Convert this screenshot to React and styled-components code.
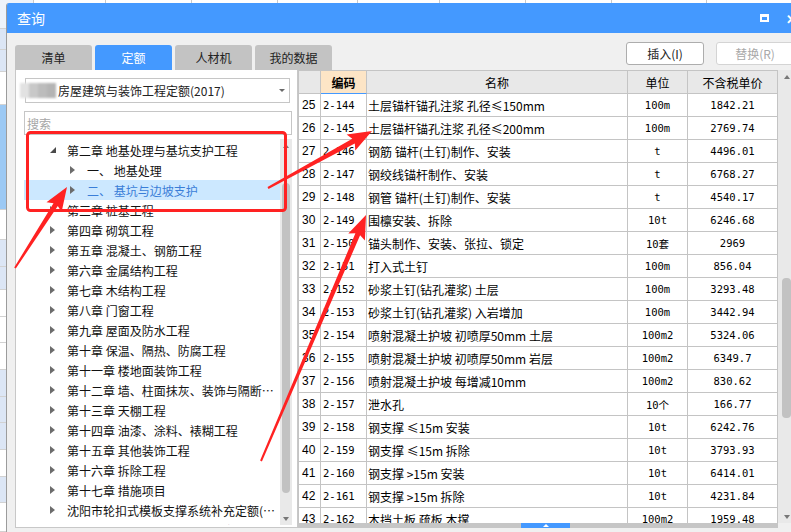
import React from 'react'
import styled, { createGlobalStyle } from 'styled-components'

const GlobalStyle = createGlobalStyle`
  html, body {
    margin: 0;
    padding: 0;
  }
  body {
    width: 791px;
    height: 532px;
    overflow: hidden;
    background: #fff;
    font-family: "Noto Sans CJK SC", "Noto Sans", sans-serif;
    color: #111;
  }
`

const sheetCols = [34, 72, 86, 86, 80, 82, 86, 86, 95, 90]
const sheetRows = [
  { h: 29, bg: '#eef3fa' }, { h: 21, bg: '#dce6f5' }, { h: 22, bg: '#dce6f5' },
  { h: 33, bg: '#fff' }, { h: 105, bg: '#9cc9f4' }, { h: 30, bg: '#fff' },
  { h: 27, bg: '#dce6f5' }, { h: 23, bg: '#dce6f5' }, { h: 27, bg: '#fff' },
  { h: 26, bg: '#fff' }, { h: 27, bg: '#fff' }, { h: 27, bg: '#dce6f5' },
  { h: 26, bg: '#dce6f5' }, { h: 27, bg: '#dce6f5' }, { h: 27, bg: '#fff' },
  { h: 26, bg: '#dce6f5' }, { h: 29, bg: '#fff' },
]

const tree = [
  { level: 0, label: '第二章 地基处理与基坑支护工程', open: true },
  { level: 1, label: '一、 地基处理' },
  { level: 1, label: '二、 基坑与边坡支护', selected: true },
  { level: 0, label: '第三章 桩基工程' },
  { level: 0, label: '第四章 砌筑工程' },
  { level: 0, label: '第五章 混凝土、钢筋工程' },
  { level: 0, label: '第六章 金属结构工程' },
  { level: 0, label: '第七章 木结构工程' },
  { level: 0, label: '第八章 门窗工程' },
  { level: 0, label: '第九章 屋面及防水工程' },
  { level: 0, label: '第十章 保温、隔热、防腐工程' },
  { level: 0, label: '第十一章 楼地面装饰工程' },
  { level: 0, label: '第十二章 墙、柱面抹灰、装饰与隔断、幕墙工程' },
  { level: 0, label: '第十三章 天棚工程' },
  { level: 0, label: '第十四章 油漆、涂料、裱糊工程' },
  { level: 0, label: '第十五章 其他装饰工程' },
  { level: 0, label: '第十六章 拆除工程' },
  { level: 0, label: '第十七章 措施项目' },
  { level: 0, label: '沈阳市轮扣式模板支撑系统补充定额(2019)' },
  { level: 0, label: '沈阳市轮扣式钢管脚手架补充定额(2019)' },
]

const rows = [
  ['25', '2-144', '土层锚杆锚孔注浆 孔径≤150mm', '100m', '1842.21'],
  ['26', '2-145', '土层锚杆锚孔注浆 孔径≤200mm', '100m', '2769.74'],
  ['27', '2-146', '钢筋 锚杆(土钉)制作、安装', 't', '4496.01'],
  ['28', '2-147', '钢绞线锚杆制作、安装', 't', '6768.27'],
  ['29', '2-148', '钢管 锚杆(土钉)制作、安装', 't', '4540.17'],
  ['30', '2-149', '围檩安装、拆除', '10t', '6246.68'],
  ['31', '2-150', '锚头制作、安装、张拉、锁定', '10套', '2969'],
  ['32', '2-151', '打入式土钉', '100m', '856.04'],
  ['33', '2-152', '砂浆土钉(钻孔灌浆) 土层', '100m', '3293.48'],
  ['34', '2-153', '砂浆土钉(钻孔灌浆) 入岩增加', '100m', '3442.94'],
  ['35', '2-154', '喷射混凝土护坡 初喷厚50mm 土层', '100m2', '5324.06'],
  ['36', '2-155', '喷射混凝土护坡 初喷厚50mm 岩层', '100m2', '6349.7'],
  ['37', '2-156', '喷射混凝土护坡 每增减10mm', '100m2', '830.62'],
  ['38', '2-157', '泄水孔', '10个', '166.77'],
  ['39', '2-158', '钢支撑 ≤15m 安装', '10t', '6242.76'],
  ['40', '2-159', '钢支撑 ≤15m 拆除', '10t', '3793.93'],
  ['41', '2-160', '钢支撑 >15m 安装', '10t', '6414.01'],
  ['42', '2-161', '钢支撑 >15m 拆除', '10t', '4231.84'],
  ['43', '2-162', '木挡土板 疏板 木撑', '100m2', '1959.48'],
]

// tapered red arrow used by the annotations
const arrowPoints = (x1, y1, x2, y2) => {
  const dx = x2 - x1
  const dy = y2 - y1
  const len = Math.hypot(dx, dy)
  const ux = dx / len
  const uy = dy / len
  const px = -uy
  const py = ux
  const head = 21
  const hw = 9
  const bx = x2 - ux * head
  const by = y2 - uy * head
  const pts = [
    [x1 + px * 1, y1 + py * 1],
    [bx + px * 2.6, by + py * 2.6],
    [bx - ux * 3 + px * hw, by - uy * 3 + py * hw],
    [x2, y2],
    [bx - ux * 3 - px * hw, by - uy * 3 - py * hw],
    [bx - px * 2.6, by - py * 2.6],
    [x1 - px * 1, y1 - py * 1],
  ]
  return pts.map((p) => p.map((v) => v.toFixed(1)).join(',')).join(' ')
}

const App = () => {
  return (
    <Desktop>
      <GlobalStyle />
      <Sheet>
        {sheetRows.map((r, i) => (
          <SheetRow key={i} $h={r.h}>
            {sheetCols.map((w, j) => (
              <SheetCell key={j} $w={w} $bg={j === 0 ? r.bg : '#fff'} />
            ))}
          </SheetRow>
        ))}
      </Sheet>

      <Window>
        <TitleBar>
          <span>查询</span>
          <TitleActions>
            <MaxIcon />
            <CloseGlyph>✕</CloseGlyph>
          </TitleActions>
        </TitleBar>

        <Body>
          <LeftPane>
            <Tabs>
              <Tab>清单</Tab>
              <Tab $active>定额</Tab>
              <Tab>人材机</Tab>
              <Tab>我的数据</Tab>
            </Tabs>
            <Panel>
              <Dropdown>
                <Mosaic>
                  <span /><span /><span /><span />
                </Mosaic>
                <DropText>房屋建筑与装饰工程定额(2017)</DropText>
                <Caret />
              </Dropdown>
              <Search>搜索</Search>
              <Tree>
                <TreeList>
                  {tree.map((t, i) => (
                    <TreeRow key={i} $level={t.level} $selected={t.selected}>
                      <Toggle>{t.open ? <Expanded /> : <Collapsed />}</Toggle>
                      <TreeLabel>{t.label}</TreeLabel>
                    </TreeRow>
                  ))}
                </TreeList>
                <ScrollBar $w={12}>
                  <ArrowUp />
                  <Thumb $top={35} $h={310} $w={8} />
                  <Spacer />
                  <ArrowDown />
                </ScrollBar>
              </Tree>
            </Panel>
          </LeftPane>

          <RightPane>
            <Toolbar>
              <Button>插入(I)</Button>
              <Button disabled>替换(R)</Button>
            </Toolbar>
            <TableArea>
              <Grid>
                <Row>
                  <HeadCell />
                  <HeadCell $active>编码</HeadCell>
                  <HeadCell>名称</HeadCell>
                  <HeadCell>单位</HeadCell>
                  <HeadCell>不含税单价</HeadCell>
                </Row>
                {rows.map((r) => (
                  <Row key={r[0]}>
                    <NumCell>{r[0]}</NumCell>
                    <CodeCell>{r[1]}</CodeCell>
                    <NameCell>{r[2]}</NameCell>
                    <MonoCell>{r[3]}</MonoCell>
                    <MonoCell>{r[4]}</MonoCell>
                  </Row>
                ))}
              </Grid>
              <ScrollBar $w={17}>
                <ArrowUp />
                <Thumb $top={199} $h={140} $w={9} />
                <Spacer />
                <ArrowDown />
              </ScrollBar>
            </TableArea>
            <Splitter>
              <SplitBar>
                <SplitHandle />
              </SplitBar>
            </Splitter>
          </RightPane>
        </Body>
      </Window>

      <Marks viewBox='0 0 791 532'>
        <rect x='27.5' y='132.5' width='258' height='78' rx='3' fill='none' stroke='#ff2222' strokeWidth='3' />
        <polygon points={arrowPoints(15, 268, 67, 187)} fill='#ff2222' />
        <polygon points={arrowPoints(268, 188, 372, 131)} fill='#ff2222' />
        <polygon points={arrowPoints(261, 461, 366, 215)} fill='#ff2222' />
      </Marks>
    </Desktop>
  )
}

const Desktop = styled.div`
  position: relative;
  width: 791px;
  height: 532px;
  overflow: hidden;
  background: #fff;
`

const Sheet = styled.div`
  display: flex;
  flex-direction: column;
`

const SheetRow = styled.div`
  display: flex;
  height: ${(p) => p.$h}px;
  border-bottom: 1px solid #d2d2d2;
  box-sizing: border-box;
`

const SheetCell = styled.div`
  flex: none;
  width: ${(p) => p.$w}px;
  background: ${(p) => p.$bg};
  border-right: 1px solid #c9c9c9;
  box-sizing: border-box;
`

const Window = styled.div`
  position: absolute;
  left: 6px;
  top: 3px;
  width: 792px;
  height: 529px;
  display: flex;
  flex-direction: column;
  background: #f0f0f0;
  border-left: 1px solid #9c9c9c;
  border-top-left-radius: 3px;
  overflow: hidden;
  box-sizing: border-box;
`

const TitleBar = styled.div`
  flex: none;
  height: 30px;
  display: flex;
  align-items: center;
  justify-content: space-between;
  padding-left: 10px;
  background: #4499ff;
  color: #fff;
  font-size: 14px;
`

const TitleActions = styled.div`
  display: flex;
  align-items: center;
  gap: 17px;
  padding-right: 1px;
`

const MaxIcon = styled.div`
  width: 9px;
  height: 8px;
  border: 2px solid #fff;
  border-top-width: 3px;
  box-sizing: border-box;
`

const CloseGlyph = styled.div`
  font-size: 13px;
  font-weight: bold;
  line-height: 1;
`

const Body = styled.div`
  flex: 1;
  display: flex;
  padding: 9px 3px 4px 8px;
  min-height: 0;
`

const LeftPane = styled.div`
  flex: none;
  width: 283px;
  display: flex;
  flex-direction: column;
  padding-top: 3px;
`

const Tabs = styled.div`
  display: flex;
  gap: 3px;
  width: max-content;
`

const Tab = styled.div`
  flex: none;
  width: 77px;
  height: 25px;
  display: flex;
  align-items: center;
  justify-content: center;
  border-radius: 3px 3px 0 0;
  font-size: 12px;
  background: ${(p) => (p.$active ? '#4499ff' : '#c3c3c3')};
  color: ${(p) => (p.$active ? '#fff' : '#222')};
`

const Panel = styled.div`
  flex: 1;
  display: flex;
  flex-direction: column;
  min-height: 0;
  padding: 8px 5px 2px 8px;
  background: #fff;
  border: 1px solid #c8c8c8;
  border-top: none;
`

const Dropdown = styled.div`
  flex: none;
  width: 265px;
  height: 25px;
  margin-left: 1px;
  display: flex;
  align-items: center;
  padding-right: 4px;
  border: 1px solid #c6c6c6;
  box-sizing: border-box;
  font-size: 12px;
  color: #222;
`

const Mosaic = styled.div`
  flex: none;
  display: flex;
  margin-left: -6px;
  margin-right: 2px;
  height: 15px;
  filter: blur(1.2px);
  span {
    width: 9px;
    height: 15px;
  }
  span:nth-child(1) { background: #e2e2e2; }
  span:nth-child(2) { background: #c8c8c8; }
  span:nth-child(3) { background: #bcbcbc; }
  span:nth-child(4) { background: #b4b4b4; }
`

const DropText = styled.div`
  flex: 1;
  white-space: nowrap;
`

const Caret = styled.div`
  width: 0;
  height: 0;
  border-left: 3px solid transparent;
  border-right: 3px solid transparent;
  border-top: 3px solid #6a6a6a;
`

const Search = styled.div`
  flex: none;
  height: 24px;
  margin-top: 8px;
  padding: 3px 2px 0;
  border: 1px solid #c6c6c6;
  box-sizing: border-box;
  font-size: 12px;
  color: #a6a6a6;
`

const Tree = styled.div`
  flex: 1;
  min-height: 0;
  display: flex;
  margin-top: 4px;
`

const TreeList = styled.div`
  flex: 1;
  min-width: 0;
  overflow: hidden;
  padding-top: 1px;
`

const TreeRow = styled.div`
  height: 20px;
  display: flex;
  align-items: center;
  padding-left: ${(p) => 26 + p.$level * 20}px;
  padding-right: 4px;
  font-size: 12px;
  background: ${(p) => (p.$selected ? '#cce8ff' : 'transparent')};
  color: ${(p) => (p.$selected ? '#3a7ed8' : '#111')};
`

const Toggle = styled.div`
  flex: none;
  width: 6px;
  margin-right: 11px;
  display: flex;
  align-items: center;
`

const Collapsed = styled.div`
  width: 0;
  height: 0;
  border-left: 5px solid #6c6c6c;
  border-top: 4px solid transparent;
  border-bottom: 4px solid transparent;
`

const Expanded = styled.div`
  width: 0;
  height: 0;
  border-bottom: 6px solid #4a4a4a;
  border-left: 6px solid transparent;
`

const TreeLabel = styled.div`
  flex: 1;
  min-width: 0;
  overflow: hidden;
  white-space: nowrap;
  text-overflow: ellipsis;
`

const ScrollBar = styled.div`
  flex: none;
  width: ${(p) => p.$w}px;
  display: flex;
  flex-direction: column;
  align-items: center;
  background: #e9e9e9;
  padding: 5px 0 4px;
  box-sizing: border-box;
`

const ArrowUp = styled.div`
  flex: none;
  width: 0;
  height: 0;
  border-left: 3px solid transparent;
  border-right: 3px solid transparent;
  border-bottom: 4px solid #777;
`

const ArrowDown = styled(ArrowUp)`
  border-bottom: none;
  border-top: 4px solid #777;
`

const Thumb = styled.div`
  flex: none;
  width: ${(p) => p.$w}px;
  height: ${(p) => p.$h}px;
  margin-top: ${(p) => p.$top}px;
  background: #c2c2c2;
  border-radius: 4px;
`

const Spacer = styled.div`
  flex: 1;
`

const RightPane = styled.div`
  flex: 1;
  min-width: 0;
  display: flex;
  flex-direction: column;
`

const Toolbar = styled.div`
  flex: none;
  height: 28px;
  display: flex;
  justify-content: flex-end;
  align-items: flex-start;
  gap: 12px;
  padding-right: 1px;
`

const Button = styled.button`
  width: 78px;
  height: 23px;
  padding: 0;
  background: #fff;
  border: 1px solid ${(p) => (p.disabled ? '#d4d4d4' : '#adadad')};
  border-radius: 3px;
  font-family: "Noto Sans CJK SC", sans-serif;
  font-size: 12px;
  color: ${(p) => (p.disabled ? '#a8a8a8' : '#222')};
`

const TableArea = styled.div`
  flex: 1;
  min-height: 0;
  display: flex;
`

const Grid = styled.div`
  flex: none;
  width: 480px;
  overflow: hidden;
  background: #fff;
  border-top: 1px solid #c4c4c4;
`

const Row = styled.div`
  display: grid;
  grid-template-columns: 22px 46px 261px 60px 90px;
  height: 23px;
  border-left: 1px solid #c4c4c4;
`

const Cell = styled.div`
  display: flex;
  align-items: center;
  overflow: hidden;
  white-space: nowrap;
  border-right: 1px solid #c4c4c4;
  border-bottom: 1px solid #c4c4c4;
  box-sizing: border-box;
  color: #000;
`

const HeadCell = styled(Cell)`
  justify-content: center;
  font-size: 12px;
  background: ${(p) => (p.$active ? '#fde5c6' : '#e8e8e8')};
  font-weight: ${(p) => (p.$active ? 'bold' : 'normal')};
  ${(p) => p.$active && 'border-bottom-color: #4499ff;'}
`

const NumCell = styled(Cell)`
  padding-left: 3px;
  font-family: "Liberation Sans", sans-serif;
  font-size: 12px;
`

const CodeCell = styled(Cell)`
  padding-left: 2px;
  font-family: "DejaVu Sans Mono", "Noto Sans CJK SC", monospace;
  font-size: 10.5px;
`

const NameCell = styled(Cell)`
  padding-left: 1px;
  font-size: 12px;
`

const MonoCell = styled(Cell)`
  justify-content: center;
  font-family: "DejaVu Sans Mono", "Noto Sans CJK SC", monospace;
  font-size: 10.5px;
`

const Splitter = styled.div`
  flex: none;
  height: 5px;
  display: flex;
`

const SplitBar = styled.div`
  width: 480px;
  display: flex;
  background: #c6c6c6;
`

const SplitHandle = styled.div`
  width: 49px;
  margin-left: 223px;
  display: flex;
  justify-content: center;
  align-items: center;
  background: #4499ff;
  &::after {
    content: '';
    border-left: 3px solid transparent;
    border-right: 3px solid transparent;
    border-bottom: 3px solid #fff;
  }
`

const Marks = styled.svg`
  position: absolute;
  left: 0;
  top: 0;
  width: 791px;
  height: 532px;
  pointer-events: none;
`

export default App
